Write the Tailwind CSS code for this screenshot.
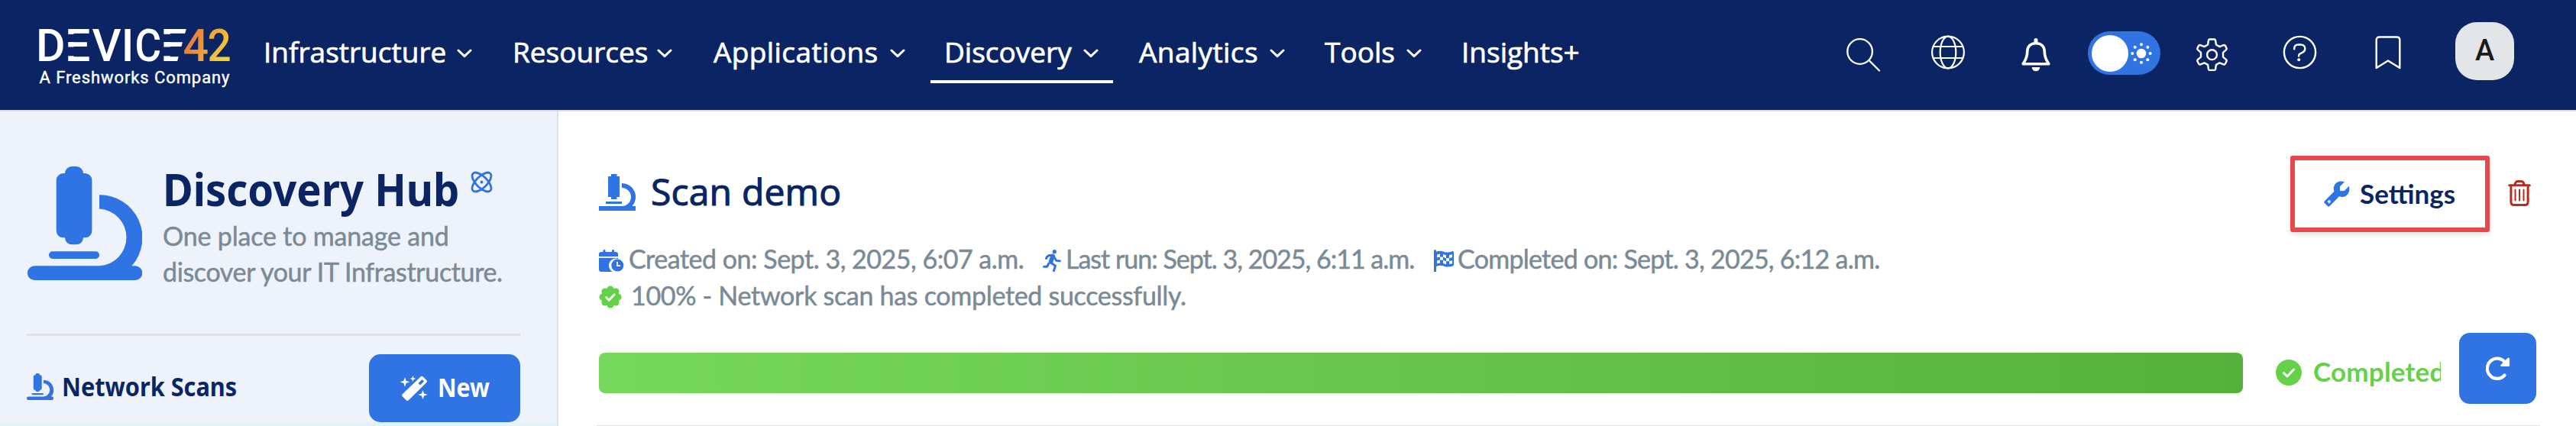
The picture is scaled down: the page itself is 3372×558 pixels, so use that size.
<!DOCTYPE html>
<html lang="en">
<head>
<meta charset="utf-8">
<title>Device42 - Discovery Hub</title>
<script src="https://cdn.jsdelivr.net/npm/@tailwindcss/browser@4"></script>
</head>
<body class="w-[3372px] h-[558px] overflow-hidden bg-white flex flex-col font-['Lato',sans-serif]">

<!-- Shared icons -->
<svg class="hidden">
  <symbol id="chevron" viewBox="0 0 20 12"><path d="M2 2l8 7.6L18 2" fill="none" stroke="currentColor" stroke-width="3" stroke-linecap="round" stroke-linejoin="round"/></symbol>
  <symbol id="microscope" viewBox="0 0 150 149"><path fill="currentColor" d="M49 9a9 9 0 0 1 9-9h6a9 9 0 0 1 9 9h2.400a9 9 0 0 1 9 9v66.300a9 9 0 0 1-9 9H73a9 9 0 0 1-9 9h-6a9 9 0 0 1-9-9h-2.300a9 9 0 0 1-9-9V18a9 9 0 0 1 9-9zM94 37.300a56 56 0 0 1 42.500 93H141a9.300 9.300 0 0 1 0 18.700H9.300a9.300 9.300 0 0 1 0-18.700H94a37.400 37.400 0 0 0 0-74.700zM32.700 111.300h56.600a4.800 4.800 0 0 1 0 9.600H32.700a4.800 4.800 0 0 1 0-9.600z"/></symbol>
</svg>

<header class="h-[146px] shrink-0 bg-[#0b2464] border-b-[2px] border-[#dadce0] flex items-start text-white">
  <svg class="ml-[46px] w-[260px] h-[143px] shrink-0" viewBox="46 0 260 143" font-family="Roboto, sans-serif" fill="#fff">
    <defs>
      <linearGradient id="brand" gradientUnits="userSpaceOnUse" x1="244" y1="44" x2="302" y2="76"><stop offset="0" stop-color="#e5713f"/><stop offset=".5" stop-color="#eda23b"/><stop offset="1" stop-color="#f3d33d"/></linearGradient>
      <linearGradient id="brand2" gradientUnits="userSpaceOnUse" x1="0" y1="-36" x2="30" y2="-4"><stop offset="0" stop-color="#eda23b"/><stop offset="1" stop-color="#f3d33d"/></linearGradient>
      <clipPath id="slant"><path d="M205 30h41L231 84h-26z"/></clipPath>
    </defs>
    <g font-size="59" font-weight="500">
      <text x="47" y="80">D</text>
      <text x="85" y="80">E</text>
      <text x="120.500" y="80">V</text>
      <text x="158.800" y="80">I</text>
      <text transform="translate(176.500 80) scale(.9 1)">C</text>
      <g clip-path="url(#slant)"><text transform="translate(209.500 80) scale(1.160 1)">E</text></g>
      <text x="239.500" y="80" fill="url(#brand)">4</text>
      <text transform="translate(271.500 80) scale(.93 1)" fill="url(#brand2)">2</text>
    </g>
    <g fill="#0b2464"><rect x="87" y="44.800" width="30" height="10.200"/><rect x="87" y="61.500" width="30" height="11.800"/><rect x="212" y="44.800" width="28" height="10.200"/><rect x="212" y="61.500" width="26" height="11.800"/></g>
    <text x="51.500" y="108.500" font-size="22" font-weight="400" stroke="#fff" stroke-width=".4" textLength="249">A Freshworks Company</text>
  </svg>

  <nav class="ml-[18px] flex items-start text-[37px] leading-[75px] font-medium font-['Open_Sans',sans-serif] whitespace-nowrap [-webkit-text-stroke:0.7px]">
    <a class="w-[313px] mr-[13px] pt-[30px] pl-[21px] pr-[19px] flex items-center justify-between">Infrastructure<svg class="w-5 h-3 mt-1"><use href="#chevron"/></svg></a>
    <a class="w-[249px] mr-[14px] pt-[30px] pl-[21px] pr-[19px] flex items-center justify-between">Resources<svg class="w-5 h-3 mt-1"><use href="#chevron"/></svg></a>
    <a class="w-[291px] mr-[14px] pt-[30px] pl-[21px] pr-[19px] flex items-center justify-between tracking-[0.4px]">Applications<svg class="w-5 h-3 mt-1"><use href="#chevron"/></svg></a>
    <a class="w-[239px] mr-[14px] pt-[30px] pl-[18px] pr-[19px] flex items-center justify-between border-b-4 border-white">Discovery<svg class="w-5 h-3 mt-1"><use href="#chevron"/></svg></a>
    <a class="w-[230px] mr-[13px] pt-[30px] pl-[20px] pr-[19px] flex items-center justify-between tracking-[0.4px]">Analytics<svg class="w-5 h-3 mt-1"><use href="#chevron"/></svg></a>
    <a class="w-[166px] mr-[14px] pt-[30px] pl-[20px] pr-[19px] flex items-center justify-between">Tools<svg class="w-5 h-3 mt-1"><use href="#chevron"/></svg></a>
    <a class="w-[190px] pt-[30px] pl-[19px]">Insights+</a>
  </nav>

  <div class="ml-auto mr-[81px] flex items-start shrink-0">
    <svg class="mt-[50px] w-[45px] h-[44px]" viewBox="0 0 45 44" fill="none" stroke="currentColor" stroke-width="2.300" stroke-linecap="round"><circle cx="17.600" cy="17.500" r="16.300"/><path d="M30 29.500l13 13"/></svg>
    <svg class="mt-[46px] ml-[66px] w-[45px] h-[45px]" viewBox="0 0 45 45" fill="none" stroke="currentColor" stroke-width="2.200"><circle cx="22" cy="22.500" r="20.900"/><ellipse cx="22" cy="22.500" rx="10.300" ry="20.900"/><path d="M3 15h38M3 30h38"/></svg>
    <svg class="mt-[50px] ml-[73px] w-[38px] h-[44px]" viewBox="0 0 38 44" fill="currentColor"><path d="M2.200 33.700C5 29 7.700 26 7.700 18 7.700 10.500 12 6.700 19 6.700s11.300 3.800 11.300 11.300c0 8 2.700 11 5.500 15.700z" fill="none" stroke="currentColor" stroke-width="3.600" stroke-linejoin="round"/><path d="M16.500 7V2.500a2.500 2.500 0 0 1 5 0V7zM13.700 38h10.600a5.300 5.300 0 0 1-10.600 0z"/></svg>
    <div class="mt-[41px] ml-[49px] w-[95px] h-[57px] rounded-full bg-[#3073e2] flex items-center pl-[5px]">
      <div class="w-12 h-12 rounded-full bg-white"></div>
      <svg class="ml-[3px] w-[28px] h-[28px]" viewBox="0 0 28 28" fill="#fff"><circle cx="14" cy="14" r="6.300"/><circle cx="14" cy="2.300" r="2"/><circle cx="14" cy="25.700" r="2"/><circle cx="2.300" cy="14" r="2"/><circle cx="25.700" cy="14" r="2"/><circle cx="5.700" cy="5.700" r="2"/><circle cx="22.300" cy="5.700" r="2"/><circle cx="5.700" cy="22.300" r="2"/><circle cx="22.300" cy="22.300" r="2"/></svg>
    </div>
    <svg class="mt-[50px] ml-[47px] w-[41px] h-[44px]" viewBox="0 0 41 44" fill="none" stroke="currentColor" stroke-width="2.400" stroke-linejoin="round"><circle cx="20.500" cy="21.700" r="6.400"/><path d="M17.500 1.500h6q1.300 0 1.600 1.500l.8 5.500 4.600 2.600 5.200-2q1.500-.5 2.200.8l1.600 3.200q.6 1.200-.4 2.100L35 18.800v5.800l4.100 3.600q1 .9.400 2.100l-1.600 3.200q-.7 1.300-2.200.8l-5.200-2-4.600 2.600-.8 5.500q-.3 1.500-1.600 1.500h-6q-1.300 0-1.600-1.500l-.8-5.500-4.600-2.600-5.200 2q-1.500.5-2.200-.8l-1.600-3.200q-.6-1.200.4-2.100L6 24.600v-5.800l-4.100-3.600q-1-.9-.4-2.100l1.600-3.200q.7-1.300 2.200-.8l5.200 2 4.600-2.600.8-5.500q.3-1.500 1.600-1.500z"/></svg>
    <svg class="mt-[46px] ml-[72px] w-[45px] h-[45px]" viewBox="0 0 45 45" fill="none" stroke="currentColor" stroke-width="2.400" stroke-linecap="round"><circle cx="22.500" cy="22.500" r="20.600"/><path d="M15.200 18.200v-.7c0-3 1.900-5 4.700-5h3.900c3.200 0 5.500 2.200 5.500 5.300 0 2.300-1.300 4-3.200 4.900l-3 1.500c-1.300.6-2 1.400-2 2.800v.5"/><circle cx="21.200" cy="32.200" r="2" fill="currentColor" stroke="none"/></svg>
    <svg class="mt-[47px] ml-[76px] w-[34px] h-[44px]" viewBox="0 0 34 44" fill="none" stroke="currentColor" stroke-width="2.400" stroke-linejoin="round"><path d="M1.700 42V5.500q0-4 4-4h22.600q4 0 4 4V42L17 32.500z"/></svg>
    <div class="mt-[29px] ml-[71px] w-[77px] h-[76px] rounded-[28px] bg-[#e4e5e9] text-[#1b1b18] font-['Roboto',sans-serif] font-medium text-[38px] leading-[75px] text-center">A</div>
  </div>
</header>

<div class="flex flex-1 min-h-0">
  <aside class="w-[731px] shrink-0 bg-[#eef3fb] border-r-2 border-[#dee2e6] flex flex-col">
    <div class="h-[294px] shrink-0 ml-[35px] mr-[48px] border-b-[3px] border-[#dee0e3] flex items-start">
      <svg class="mt-[72px] ml-[1px] w-[150px] h-[149px] text-[#3073e2]"><use href="#microscope"/></svg>
      <div class="ml-[27px] mt-[64px] flex flex-col items-start whitespace-nowrap">
        <div class="h-[75px] flex items-start">
          <h1 class="w-[396px] text-[59px] leading-[75px] font-bold text-[#0b2464] font-['Noto_Sans',sans-serif] origin-left scale-x-[0.921]">Discovery Hub</h1>
          <svg class="mt-[14px] ml-[7px] w-[29px] h-[29px]" viewBox="0 0 29 29" fill="none" stroke="#3073e2" stroke-width="2.800"><ellipse cx="14.500" cy="14.500" rx="16" ry="7.300" transform="rotate(45 14.500 14.500)"/><ellipse cx="14.500" cy="14.500" rx="16" ry="7.300" transform="rotate(-45 14.500 14.500)"/><circle cx="14.500" cy="14.500" r="1.900" fill="#3073e2" stroke="none"/></svg>
        </div>
        <p class="text-[34px] leading-[47px] text-[#7b8a94] tracking-[-0.18px] [-webkit-text-stroke:0.5px]">One place to manage and<br><span class="tracking-[-0.36px]">discover your IT Infrastructure.</span></p>
      </div>
    </div>
    <div class="h-[113px] shrink-0 pl-[35px] pr-[48px] pt-[24px] flex items-start">
      <svg class="mt-[25px] w-[35px] h-[35px] text-[#3073e2]"><use href="#microscope"/></svg>
      <h2 class="ml-[11px] mt-[5px] w-[240px] text-[34px] leading-[75px] font-bold text-[#0b2464] font-['Noto_Sans',sans-serif] whitespace-nowrap origin-left scale-x-[0.902]">Network Scans</h2>
      <button class="ml-auto w-[198px] h-[89px] rounded-[15px] bg-[#3073e2] text-white flex items-center pl-[41px]">
        <svg class="w-[36px] h-[34px]" viewBox="0 0 36 34" fill="#fff"><path fill-rule="evenodd" d="M2.500 24.500L26.800 1.200q1.500-1.200 3 .2l4.500 4.600q1.300 1.500 0 3L10.500 32.500q-1.200 1.200-2.500 0L2.500 27q-1-1.300 0-2.500zM23.500 10l2.600 2.600 5-5-2.600-2.600z"/><path d="M6 2l1.600 4.700L12.300 8.300 7.600 10 6 14.700 4.400 10-.3 8.300l4.700-1.600zM16.500 0l1.100 2.900 2.900 1.100-2.900 1.100-1.100 2.900-1.100-2.900L12.500 4l2.900-1.100zM29.500 18.700l1.600 4.700 4.700 1.600-4.700 1.600-1.600 4.700-1.600-4.700-4.700-1.600 4.700-1.600z"/></svg>
        <span class="ml-[13px] -mt-[3px] text-[34px] font-bold font-['Noto_Sans',sans-serif] origin-left scale-x-[0.89]">New</span>
      </button>
    </div>
    <div class="flex-1 bg-[#e3f2f5]"></div>
  </aside>

  <main class="flex-1 min-w-0 pl-[50px] pr-[47px] flex flex-col bg-white">
    <div class="h-[169px] shrink-0 pl-[3px] flex items-start">
      <svg class="mt-[82px] w-[48px] h-[48px]" viewBox="0 0 48 48" fill="#3073e2"><path d="M16 0h7.500v3H27v27h-3.500v3H16v-3h-4V3h4zM9 36h21v3H9zM30 12a18 18 0 0 1 13.500 30H48v6H0v-6h30a12 12 0 0 0 0-24z"/></svg>
      <h2 class="ml-[20px] mt-[67px] text-[48px] leading-[76px] font-medium text-[#0b2464] font-['Open_Sans',sans-serif] whitespace-nowrap tracking-[0.2px] [-webkit-text-stroke:1.1px]">Scan demo</h2>
      <button class="ml-auto mt-[58px] w-[261px] h-[100px] border-[6px] border-[#e5484d] rounded-[3px] bg-white shadow-[0_3px_6px_rgba(0,0,0,0.12)] flex items-center pl-[38px]">
        <svg class="w-[34px] h-[34px]" viewBox="0 0 34 34" fill="#3073e2"><path fill-rule="evenodd" d="M27 1.200L21 7.300v5.700h5.700l6.100-6.200C34.800 13 31.500 21 24 21q-2 0-4-.7L7.500 33q-1.300 1-2.600 0L.8 29q-1-1.300 0-2.600L13.400 13.800q-1.200-3-.3-6.300C14.800 1.500 21-1 27 1.200zM6.800 24.800l-2.300 2.300 2.300 2.300 2.300-2.300z"/></svg>
        <span class="ml-[13px] -mt-[3px] text-[35px] leading-[44px] font-bold text-[#0b2464]">Settings</span>
      </button>
      <svg class="ml-[24px] mr-[12px] mt-[90px] w-[30px] h-[34px]" viewBox="0 0 30 34" fill="none" stroke="#bb2a20" stroke-width="3" stroke-linecap="round"><path d="M1.700 6.700h26.600M3.900 7v21.500q0 4 4 4h14.200q4 0 4-4V7M8.700 6q1.300-4.500 4-4.500h4.600q2.700 0 4 4.500"/><path d="M9.500 12.500v14M15 12.500v14M20.500 12.500v14" stroke-width="2"/></svg>
    </div>

    <div class="h-[96px] shrink-0 pl-[3px] text-[34px] leading-[48px] text-[#7b8a94] whitespace-nowrap [-webkit-text-stroke:0.5px]">
      <div class="h-[48px] flex items-start">
        <svg class="mt-[12px] w-[33px] h-[29px]" viewBox="0 0 33 29" fill="#3073e2"><path d="M0 9V6q0-3 3-3h2.500V1.400a1.500 1.500 0 0 1 3 0V3h8.500V1.400a1.500 1.500 0 0 1 3 0V3H22q3 0 3 3v3zM0 10.700h25v1.200a9.300 9.300 0 0 0-7.300 17H3q-3 0-3-3z"/><circle cx="24.300" cy="20.600" r="8"/><path d="M24 15.800v5.400h4" fill="none" stroke="#fff" stroke-width="1.800"/></svg>
        <span class="ml-[6px] w-[517px] tracking-[-0.49px]">Created on: Sept. 3, 2025, 6:07 a.m.</span>
        <svg class="ml-[25px] mt-[12px] w-[24px] h-[29px]" viewBox="0 0 24 29" fill="none" stroke="#3073e2" stroke-linecap="round" stroke-linejoin="round"><circle cx="15.300" cy="2.700" r="2.600" fill="#3073e2" stroke="none"/><path d="M4.500 11.500q1.500-4 5-4 3 0 4.500.8" stroke-width="3"/><path d="M13 8.500L10.500 16" stroke-width="5.600"/><path d="M14.500 9l3.300 5.400 4.700.4" stroke-width="2.800"/><path d="M11 17.500l5.500 3.500-2 6.500M7.500 18.500l-1.800 3.700H1.600" stroke-width="3"/></svg>
        <span class="ml-[6px] w-[458px] tracking-[-1px]">Last run: Sept. 3, 2025, 6:11 a.m.</span>
        <svg class="ml-[24px] mt-[12px] w-[26px] h-[29px]" viewBox="0 0 26 29" fill="#3073e2"><path d="M0 1.500a1.500 1.500 0 0 1 3 0v1.200q5-2 10 0t11-.5q2-.5 2 1.500v16q0 1.200-1.500 1.800-6 2-11 .2T3 22v6a1.500 1.500 0 0 1-3 0z"/><g fill="#fff"><path d="M4 6.500l4-1v4l-4 .7zM12 6l4 1.300v4l-4-1.500zM20 7l4-.8v4l-4 .8zM8 9.500l4 .3v4l-4-.3zM16 11.300l4-.3v4l-4 .3zM4 14.200l4-.7v4l-4 .7zM12 13.800l4 1.500v4l-4-1.500zM20 15l4-.8v4l-4 .8z"/></g></svg>
        <span class="ml-[5px] tracking-[-0.74px]">Completed on: Sept. 3, 2025, 6:12 a.m.</span>
      </div>
      <div class="h-[48px] flex items-start">
        <svg class="mt-[11px] w-[30px] h-[30px]" viewBox="0 0 30 30"><g fill="#64d149"><circle cx="15" cy="15" r="11.500"/><circle cx="15" cy="5" r="4.600"/><circle cx="22" cy="8" r="4.600"/><circle cx="25" cy="15" r="4.600"/><circle cx="22" cy="22" r="4.600"/><circle cx="15" cy="25" r="4.600"/><circle cx="8" cy="22" r="4.600"/><circle cx="5" cy="15" r="4.600"/><circle cx="8" cy="8" r="4.600"/></g><path d="M9.500 15.500l3.700 3.700 7-7.400" fill="none" stroke="#fff" stroke-width="2.700" stroke-linecap="round" stroke-linejoin="round"/></svg>
        <span class="ml-[12px] tracking-[-0.3px]">100% - Network scan has completed successfully.</span>
      </div>
    </div>

    <div class="h-[146px] shrink-0 pl-[3px] pr-[5px] pt-[25px] flex items-start">
      <div class="mt-[26px] w-[2152px] h-[53px] rounded-[8px] bg-linear-to-r from-[#76d85d] to-[#54b23a]"></div>
      <svg class="ml-[43px] mt-[35px] w-[34px] h-[34px]" viewBox="0 0 34 34"><circle cx="17" cy="17" r="17" fill="#64d149"/><path d="M10.500 17.500l4.500 4.500 8.500-9" fill="none" stroke="#fff" stroke-width="3" stroke-linecap="round" stroke-linejoin="round"/></svg>
      <div class="ml-[15px] mt-[28px] w-[167px] overflow-hidden whitespace-nowrap text-[35px] leading-[45px] font-bold text-[#64d149] tracking-[0.2px]">Completed</div>
      <button class="ml-auto w-[101px] h-[93px] rounded-[14px] bg-[#3073e2] flex items-center justify-center">
        <svg class="w-[32px] h-[31px]" viewBox="0 0 32 31" fill="none"><path d="M25 7.500A13 13.200 0 1 0 24.500 24.500" stroke="#fff" stroke-width="4.200" stroke-linecap="round"/><path d="M31 3v8.500q0 1.500-1.500 1.500h-9q-2.300-.5-.8-2.300l8.800-8.800q2.200-1.200 2.500 1.100z" fill="#fff"/></svg>
      </button>
    </div>
    <div class="w-[2544px] h-px shrink-0 bg-[#dddfe1]"></div>
  </main>
</div>
</body>
</html>
